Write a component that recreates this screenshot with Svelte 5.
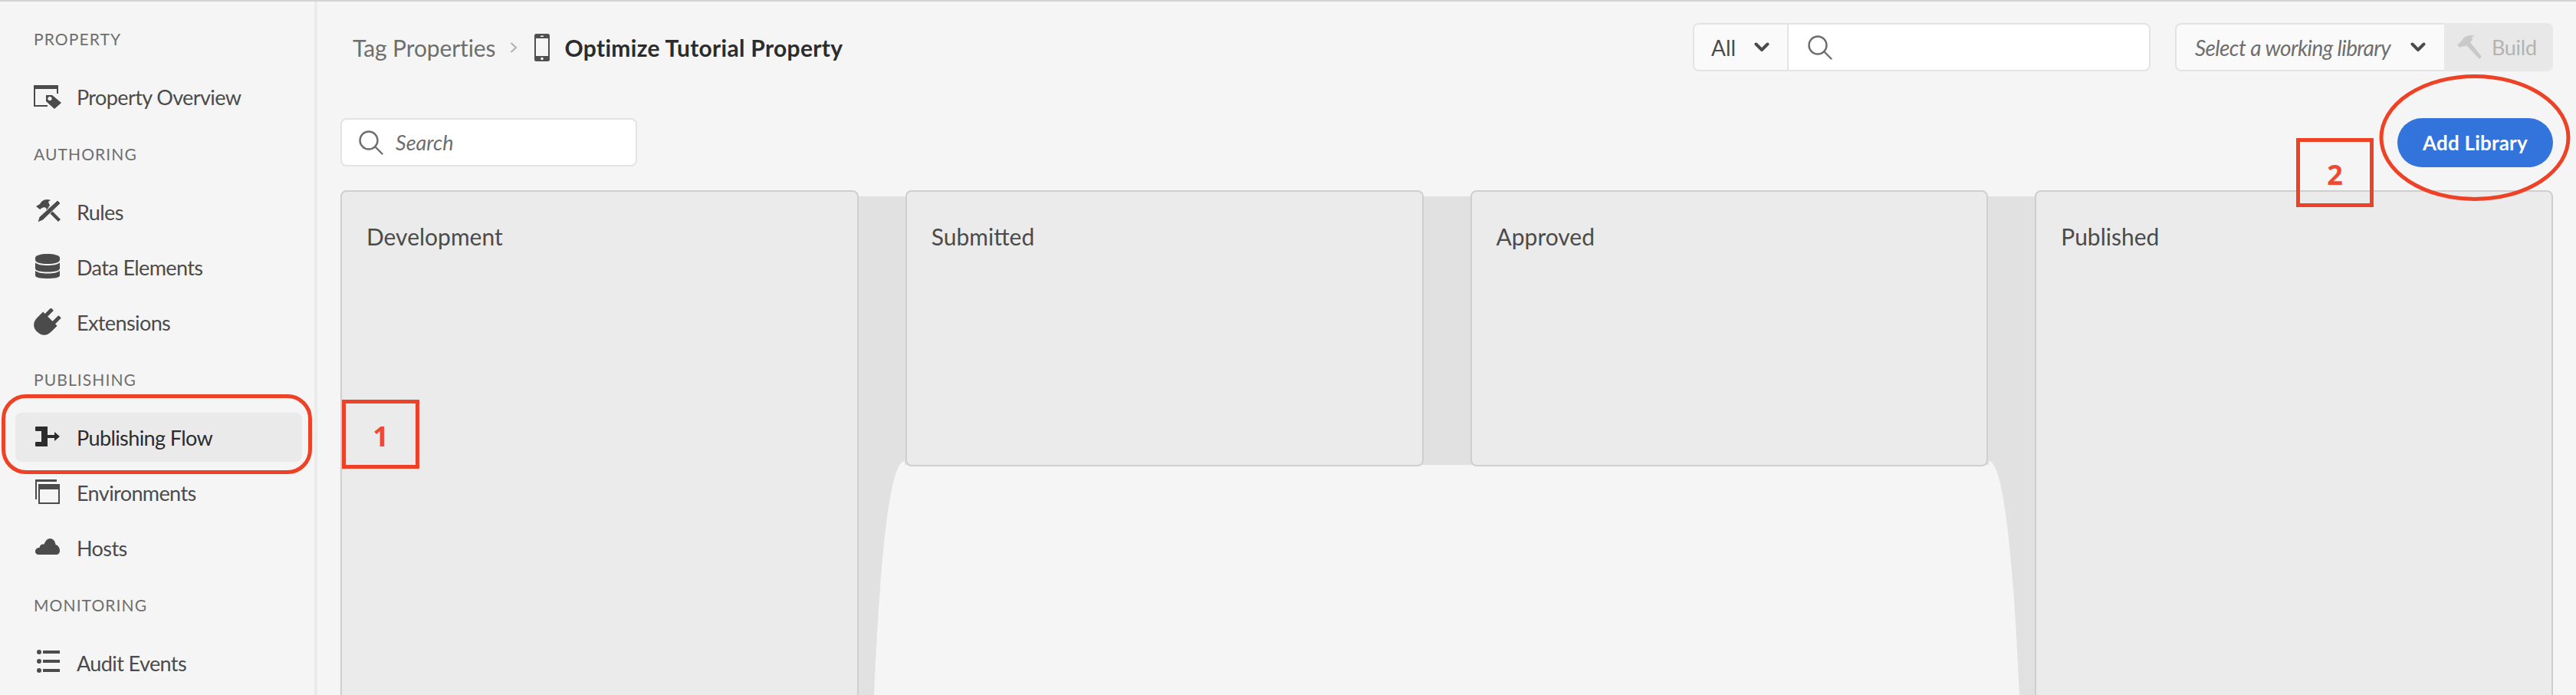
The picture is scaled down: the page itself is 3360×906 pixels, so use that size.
<script>
  const cards = [
    { name: "Development", tall: true },
    { name: "Submitted", tall: false },
    { name: "Approved", tall: false },
    { name: "Published", tall: true }
  ];
</script>

{#snippet search()}
  <svg class="search-icon" width="32" height="32" viewBox="0 0 32 32" fill="none" stroke="#6e6e6e" stroke-width="2.4" stroke-linecap="round">
    <circle cx="13" cy="13" r="11.5"></circle>
    <line x1="21.5" y1="21.5" x2="30.5" y2="30.5"></line>
  </svg>
{/snippet}

{#snippet chevron()}
  <svg class="chevron" width="20" height="13" viewBox="0 0 20 13" fill="none" stroke="#4b4b4b" stroke-width="4" stroke-linecap="round" stroke-linejoin="round">
    <polyline points="2.5 2.5 10 10 17.5 2.5"></polyline>
  </svg>
{/snippet}

<div class="app">
  <nav class="sidebar">
    <div class="label">PROPERTY</div>
    <ul>
      <li class="item">
        <svg width="36" height="36" viewBox="0 0 36 36" fill="#4b4b4b">
          <path d="M0 3h32v11h-2V8H2v21h16v2H0z"></path>
          <path d="M16 16h8l12 10-9 8-11-10z"></path>
          <circle cx="21" cy="20.5" r="2.6" fill="#f5f5f5"></circle>
        </svg>
        Property Overview
      </li>
    </ul>

    <div class="label">AUTHORING</div>
    <ul>
      <li class="item">
        <svg width="36" height="36" viewBox="0 0 36 36" fill="#4b4b4b">
          <path d="M3 11l5-3 2-3c3-3 8-4 12-2l-3 2 2 5-4 4-3-2-3 1-3 2z"></path>
          <path d="M16 15l3-3 16 16-3 3z"></path>
          <path d="M31 3l4 4L12 29l-7 3 2-7z" stroke="#f5f5f5" stroke-width="1"></path>
        </svg>
        Rules
      </li>
      <li class="item">
        <svg width="36" height="36" viewBox="0 0 36 36" fill="#4b4b4b">
          <path d="M2 6C2 3 9 1 18 1s16 2 16 5v3c0 3-7 5-16 5S2 12 2 9z"></path>
          <path d="M2 12.500c3 2.500 9 3.500 16 3.500s13-1 16-3.500V20c0 3-7 4.500-16 4.500S2 23 2 20z"></path>
          <path d="M2 23c3 2.500 9 3.500 16 3.500s13-1 16-3.500v6c0 3-7 4-16 4s-16-1-16-4z"></path>
        </svg>
        Data Elements
      </li>
      <li class="item">
        <svg width="36" height="36" viewBox="0 0 36 36" fill="#4b4b4b">
          <g transform="translate(-3 2) rotate(45 18 18)">
            <rect x="8.500" y="-2" width="5" height="13" rx="1"></rect>
            <rect x="22.500" y="-2" width="5" height="13" rx="1"></rect>
            <path d="M5 9h26v11c0 8-5 13-13 13S5 28 5 20z"></path>
          </g>
        </svg>
        Extensions
      </li>
    </ul>

    <div class="label">PUBLISHING</div>
    <ul>
      <li class="item active">
        <svg width="36" height="36" viewBox="0 0 36 36" fill="#2c2c2c">
          <path d="M3 4h15v26H3a1 1 0 0 1-1-1v-4a1 1 0 0 1 1-1h7V10H3a1 1 0 0 1-1-1V5a1 1 0 0 1 1-1z"></path>
          <path d="M18 15h9v-4l7 6-7 6v-4h-9z"></path>
        </svg>
        Publishing Flow
      </li>
      <li class="item">
        <svg width="36" height="36" viewBox="0 0 36 36" fill="#4b4b4b">
          <path d="M2 1h28v3H4v23H2z"></path>
          <path fill-rule="evenodd" d="M6 7h28v26H6zM8 14v17h24V14z"></path>
        </svg>
        Environments
      </li>
      <li class="item">
        <svg width="36" height="36" viewBox="0 0 36 36" fill="#4b4b4b">
          <path d="M7 27C3.500 27 2 25 2 23c0-3 2-5 5.500-5 .5-4 3.500-5 6-4.500C15 9 18 6 21 6c4 0 7 3 7.500 8 3.500 1 5.500 4 5.500 8 0 3-2 5-5 5z"></path>
        </svg>
        Hosts
      </li>
    </ul>

    <div class="label">MONITORING</div>
    <ul>
      <li class="item">
        <svg width="36" height="36" viewBox="0 0 36 36" fill="#4b4b4b">
          <circle cx="7" cy="4" r="3"></circle>
          <circle cx="7" cy="16" r="3"></circle>
          <circle cx="7" cy="28" r="3"></circle>
          <rect x="12" y="2" width="22" height="4"></rect>
          <rect x="12" y="14" width="22" height="4"></rect>
          <rect x="12" y="26" width="22" height="4"></rect>
        </svg>
        Audit Events
      </li>
    </ul>
  </nav>

  <main class="main">
    <header class="header">
      <div class="crumbs">
        <span class="crumb">Tag Properties</span>
        <svg width="10" height="20" viewBox="0 0 10 20" fill="none" stroke="#b3b3b3" stroke-width="2.200">
          <polyline points="1.500 4 8 10 1.500 16"></polyline>
        </svg>
        <svg class="phone" width="20" height="36" viewBox="0 0 20 36">
          <rect width="20" height="36" rx="2.500" fill="#505050"></rect>
          <rect x="2" y="6" width="16" height="23" fill="#f5f5f5"></rect>
          <circle cx="10" cy="32.500" r="1.800" fill="#f5f5f5"></circle>
          <rect x="8" y="2.500" width="4" height="1.500" fill="#f5f5f5"></rect>
        </svg>
        <span class="title">Optimize Tutorial Property</span>
      </div>
      <div class="header-right">
        <div class="global-search">
          <div class="scope">
            <span>All</span>
            {@render chevron()}
          </div>
          <div class="global-input">
            {@render search()}
          </div>
        </div>
        <div class="library">
          <div class="library-select">
            <span>Select a working library</span>
            {@render chevron()}
          </div>
          <div class="build">
            <svg width="34" height="32" viewBox="0 0 34 32" fill="#c9c9c9">
              <path d="M1 13l6-6 2-3c4-4 10-5 15-3l-4 2 1 3-3 3 15 19-3 3-17-18-3 2-2-1-3 2z"></path>
            </svg>
            <span>Build</span>
          </div>
        </div>
      </div>
    </header>

    <div class="toolbar">
      <div class="search-box">
        {@render search()}
        <span>Search</span>
      </div>
      <button class="add" type="button">Add Library</button>
    </div>

    <div class="board">
      <svg class="flow" width="2886" height="658" viewBox="0 0 2886 658" fill="#e1e1e1">
        <path d="M660 8H2226V658H2190C2183 500 2171 353 2150 353V358H736V353C715 353 703 500 696 658H660Z"></path>
      </svg>
      {#each cards as card}
        <section class="card" class:tall={card.tall}>{card.name}</section>
      {/each}
    </div>
  </main>

  <!-- annotations drawn on top of the screenshot -->
  <div class="note note-nav"></div>
  <div class="note box box-1">1</div>
  <div class="note box box-2">2</div>
  <svg class="note note-ellipse" width="250" height="165" viewBox="0 0 250 165" fill="none" stroke="#ee4227" stroke-width="5">
    <ellipse cx="125" cy="82.500" rx="122" ry="80"></ellipse>
  </svg>
</div>

<style>
  :global(body) {
    margin: 0;
    background: #f5f5f5;
  }

  .app {
    position: relative;
    display: flex;
    height: 904px;
    border-top: 2px solid #d3d3d3;
    overflow: hidden;
    font-family: Lato, "Open Sans", sans-serif;
    color: #4b4b4b;
    background: #f5f5f5;
  }

  .sidebar {
    flex: none;
    box-sizing: border-box;
    width: 414px;
    padding: 37px 16px 0 20px;
    border-right: 4px solid #ebebeb;
  }

  .label {
    height: 24px;
    margin: 0 0 31px 24px;
    font-size: 21px;
    line-height: 24px;
    letter-spacing: 1.100px;
    color: #6e6e6e;
  }

  ul {
    display: flex;
    flex-direction: column;
    gap: 8px;
    margin: 0 0 31px;
    padding: 0;
    list-style: none;
  }

  .item {
    display: flex;
    align-items: center;
    gap: 20px;
    height: 64px;
    padding-left: 24px;
    border-radius: 8px;
    font-size: 27px;
    letter-spacing: -0.6px;
  }

  .item.active {
    background: #eaeaea;
    color: #2c2c2c;
  }

  .item svg {
    flex: none;
  }

  .main {
    flex: 1;
    min-width: 0;
    padding: 28px 30px 0;
  }

  .header {
    display: flex;
    justify-content: space-between;
    align-items: center;
    height: 63px;
  }

  .crumbs {
    display: flex;
    align-items: center;
    margin-left: 16px;
    font-size: 30px;
  }

  .crumb {
    color: #6e6e6e;
    margin-right: 18px;
    letter-spacing: -0.1px;
  }

  .phone {
    margin: 0 20px 0 22px;
  }

  .title {
    font-weight: 700;
    color: #2c2c2c;
    letter-spacing: 0.3px;
  }

  .header-right {
    display: flex;
    gap: 32px;
  }

  .global-search {
    display: flex;
    box-sizing: border-box;
    width: 597px;
    height: 63px;
    border: 2px solid #e3e3e3;
    border-radius: 8px;
    overflow: hidden;
    background: #fff;
  }

  .scope {
    display: flex;
    align-items: center;
    gap: 24px;
    box-sizing: border-box;
    width: 123px;
    padding-left: 22px;
    border-right: 2px solid #e3e3e3;
    background: #fafafa;
    font-size: 28px;
  }

  .global-input {
    display: flex;
    align-items: center;
    padding-left: 25px;
  }

  .library {
    display: flex;
    width: 493px;
    height: 63px;
  }

  .library-select {
    display: flex;
    align-items: center;
    justify-content: space-between;
    box-sizing: border-box;
    width: 351px;
    padding: 0 24px 0 24px;
    border: 2px solid #e3e3e3;
    border-right: none;
    border-radius: 8px 0 0 8px;
    background: #fafafa;
    font-size: 28px;
    font-style: italic;
    letter-spacing: -0.6px;
    color: #6e6e6e;
  }

  .build {
    flex: 1;
    display: flex;
    align-items: center;
    gap: 12px;
    padding-left: 16px;
    border-radius: 0 8px 8px 0;
    background: #e8e8e8;
    font-size: 27px;
    letter-spacing: -0.3px;
    color: #b3b3b3;
  }

  .toolbar {
    display: flex;
    justify-content: space-between;
    margin-top: 61px;
  }

  .search-box {
    display: flex;
    align-items: center;
    gap: 16px;
    box-sizing: border-box;
    width: 387px;
    height: 63px;
    padding-left: 22px;
    border: 2px solid #e3e3e3;
    border-radius: 8px;
    background: #fff;
    font-size: 27px;
    font-style: italic;
    color: #6e6e6e;
  }

  .add {
    width: 203px;
    height: 64px;
    padding: 0;
    border: none;
    border-radius: 32px;
    background: #3274dc;
    color: #fff;
    font: 700 26px Lato, "Open Sans", sans-serif;
    letter-spacing: 0.2px;
  }

  .board {
    position: relative;
    display: grid;
    grid-template-columns: repeat(4, 1fr);
    gap: 61px;
    align-items: start;
    margin-top: 30px;
  }

  .flow {
    position: absolute;
    top: 0;
    left: 0;
  }

  .card {
    position: relative;
    box-sizing: border-box;
    height: 360px;
    padding: 41px 32px;
    border: 2px solid #cfcfcf;
    border-radius: 8px;
    background: #ebebeb;
    font-size: 30px;
    line-height: 34px;
  }

  .card.tall {
    height: 720px;
  }

  .note {
    position: absolute;
  }

  .note-nav {
    box-sizing: border-box;
    left: 2px;
    top: 512px;
    width: 405px;
    height: 104px;
    border: 5px solid #ee4227;
    border-radius: 32px;
  }

  .box {
    display: flex;
    align-items: center;
    justify-content: center;
    box-sizing: border-box;
    padding-top: 4px;
    border: 5px solid #ee4227;
    color: #ee4a33;
    font-family: "Open Sans", sans-serif;
    font-size: 36px;
    font-weight: 700;
  }

  .box-1 {
    left: 446px;
    top: 519px;
    width: 101px;
    height: 90px;
  }

  .box-2 {
    left: 2995px;
    top: 178px;
    width: 101px;
    height: 90px;
  }

  .note-ellipse {
    left: 3103px;
    top: 95px;
  }
</style>
